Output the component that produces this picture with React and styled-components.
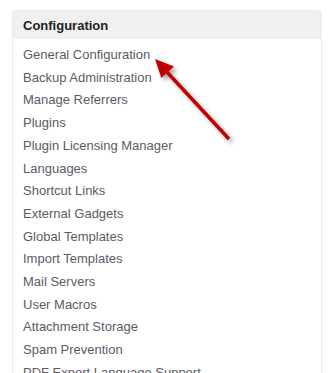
import styled, { createGlobalStyle } from "styled-components";

const Global = createGlobalStyle`
  body {
    margin: 0;
    background: #fff;
    font-family: Arial, "Liberation Sans", sans-serif;
  }
`;

const Page = styled.div`
  position: relative;
  width: 330px;
  height: 373px;
  overflow: hidden;
  padding: 10px 8px 0 12px;
  box-sizing: border-box;
`;

const Panel = styled.div`
  width: 310px;
  border: 1px solid #ebebeb;
  border-bottom: none;
  border-radius: 4px 4px 0 0;
  box-sizing: border-box;
  height: 400px;
`;

const Header = styled.div`
  height: 28px;
  background-color: #f0f0f0;
  border-radius: 3px 3px 0 0;
  display: flex;
  align-items: center;
  padding-left: 10px;
  font-size: 13px;
  font-weight: bold;
  color: #222;
`;

const List = styled.ul`
  list-style: none;
  margin: 0;
  padding: 5px 0 0 10px;
`;

const Item = styled.li`
  font-size: 13px;
  line-height: 22.7px;
  color: #5b5b66;
  white-space: nowrap;
`;

const Overlay = styled.svg`
  position: absolute;
  left: 0;
  top: 0;
  pointer-events: none;
`;

const items = [
  "General Configuration",
  "Backup Administration",
  "Manage Referrers",
  "Plugins",
  "Plugin Licensing Manager",
  "Languages",
  "Shortcut Links",
  "External Gadgets",
  "Global Templates",
  "Import Templates",
  "Mail Servers",
  "User Macros",
  "Attachment Storage",
  "Spam Prevention",
  "PDF Export Language Support",
];

const Arrow = () => (
  <Overlay width="330" height="373" viewBox="0 0 330 373">
    <defs>
      <filter id="sh" x="-20%" y="-20%" width="160%" height="160%">
        <feDropShadow dx="3" dy="3" stdDeviation="2" floodColor="#000" floodOpacity="0.35" />
      </filter>
    </defs>
    <g filter="url(#sh)">
      <line x1="166" y1="71" x2="229" y2="139" stroke="#c00000" strokeWidth="3.5" />
      <polygon points="155,59 161.3,78 174,66.5" fill="#c00000" />
    </g>
  </Overlay>
);

export default function App() {
  return (
    <>
      <Global />
      <Page>
        <Panel>
          <Header>Configuration</Header>
          <List>
            {items.map((t) => (
              <Item key={t}>{t}</Item>
            ))}
          </List>
        </Panel>
        <Arrow />
      </Page>
    </>
  );
}
